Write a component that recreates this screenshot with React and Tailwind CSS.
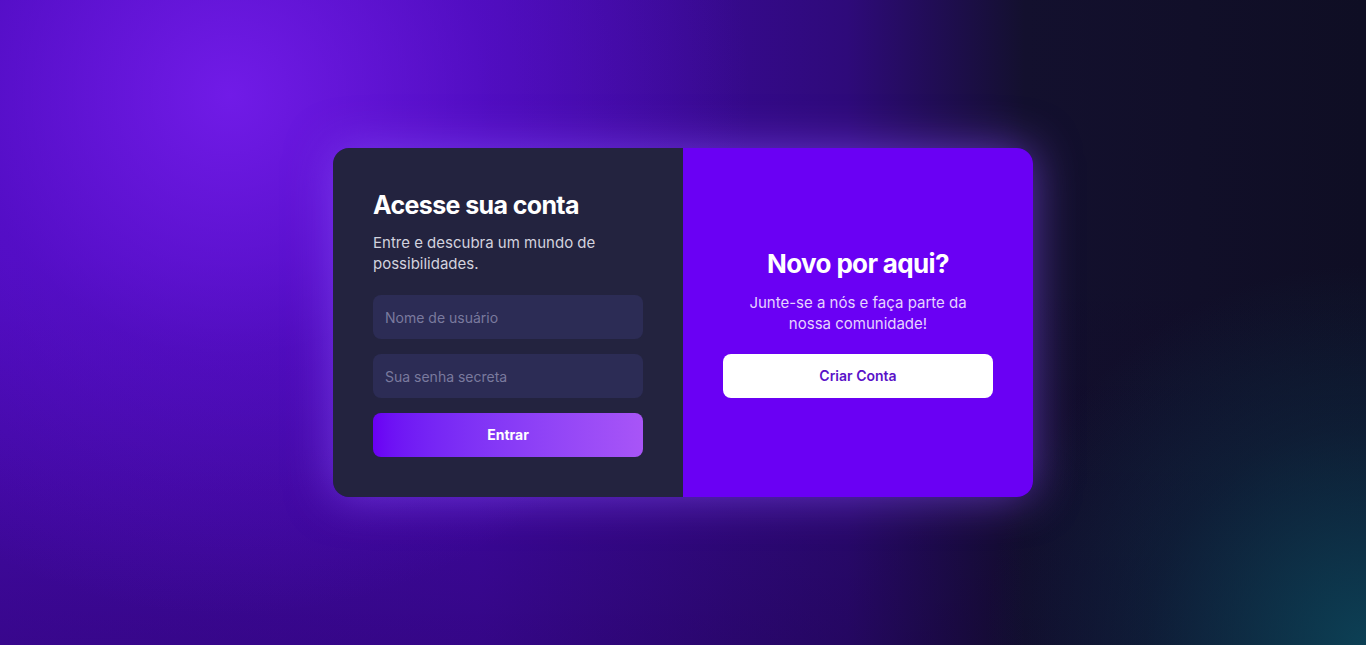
import React from 'react';

export default function App() {
  return (
    <main
      className="relative w-full h-[645px] overflow-hidden flex items-center justify-center bg-[#0f0e24]"
      style={{ fontFamily: 'Inter, "Open Sans", sans-serif' }}
    >
      {/* Background glows */}
      <div className="absolute inset-0 bg-[linear-gradient(90deg,#4a0ab8_0%,#4509b0_35%,#2e0a7a_62%,#13102e_75%,#0f0e24_100%)]"></div>
      <div className="absolute inset-0 bg-[linear-gradient(180deg,rgba(0,0,0,0)_40%,rgba(15,0,40,0.3)_100%)]"></div>
      <div className="absolute inset-0 bg-[radial-gradient(circle_at_230px_95px,rgba(120,30,240,0.85)_0px,rgba(100,20,220,0.4)_260px,rgba(80,10,200,0)_520px)]"></div>
      <div className="absolute inset-0 bg-[radial-gradient(circle_at_1366px_645px,rgba(12,70,90,0.9)_0px,rgba(12,60,80,0.35)_220px,rgba(12,50,70,0)_380px)]"></div>

      {/* Card */}
      <div className="relative z-10 w-[700px] h-[349px] flex rounded-2xl overflow-hidden shadow-[0_0_45px_rgba(140,80,255,0.6)]">
        <section className="w-[350px] bg-[#23233f] px-10 pt-10 pb-10 flex flex-col">
          <h2 className="text-[25px] leading-[34px] font-bold text-white tracking-tight">Acesse sua conta</h2>
          <p className="mt-[10px] text-[15px] leading-[21px] text-[#d2d2de]">
            Entre e descubra um mundo de possibilidades.
          </p>
          <div className="mt-[21px] flex flex-col gap-[15px]">
            <input
              type="text"
              placeholder="Nome de usuário"
              className="h-11 w-full rounded-lg bg-[#2c2c55] px-3 text-sm text-white placeholder:text-[#7a7a9e] outline-none"
            />
            <input
              type="password"
              placeholder="Sua senha secreta"
              className="h-11 w-full rounded-lg bg-[#2c2c55] px-3 text-sm text-white placeholder:text-[#7a7a9e] outline-none"
            />
            <button className="h-11 w-full rounded-lg bg-gradient-to-r from-[#6a00f4] to-[#a855f7] text-sm font-bold text-white">
              Entrar
            </button>
          </div>
        </section>

        <section className="w-[350px] bg-[#6a00f4] px-10 flex flex-col items-center justify-center text-center">
          <h2 className="text-[26px] leading-8 font-bold text-white tracking-tight">Novo por aqui?</h2>
          <p className="mt-3 text-[15px] leading-[21px] text-[#e6d4ff]">
            Junte-se a nós e faça parte da
            <br />
            nossa comunidade!
          </p>
          <button className="mt-5 h-11 w-full rounded-lg bg-white text-sm font-semibold text-[#5a12c8]">
            Criar Conta
          </button>
        </section>
      </div>
    </main>
  );
}
